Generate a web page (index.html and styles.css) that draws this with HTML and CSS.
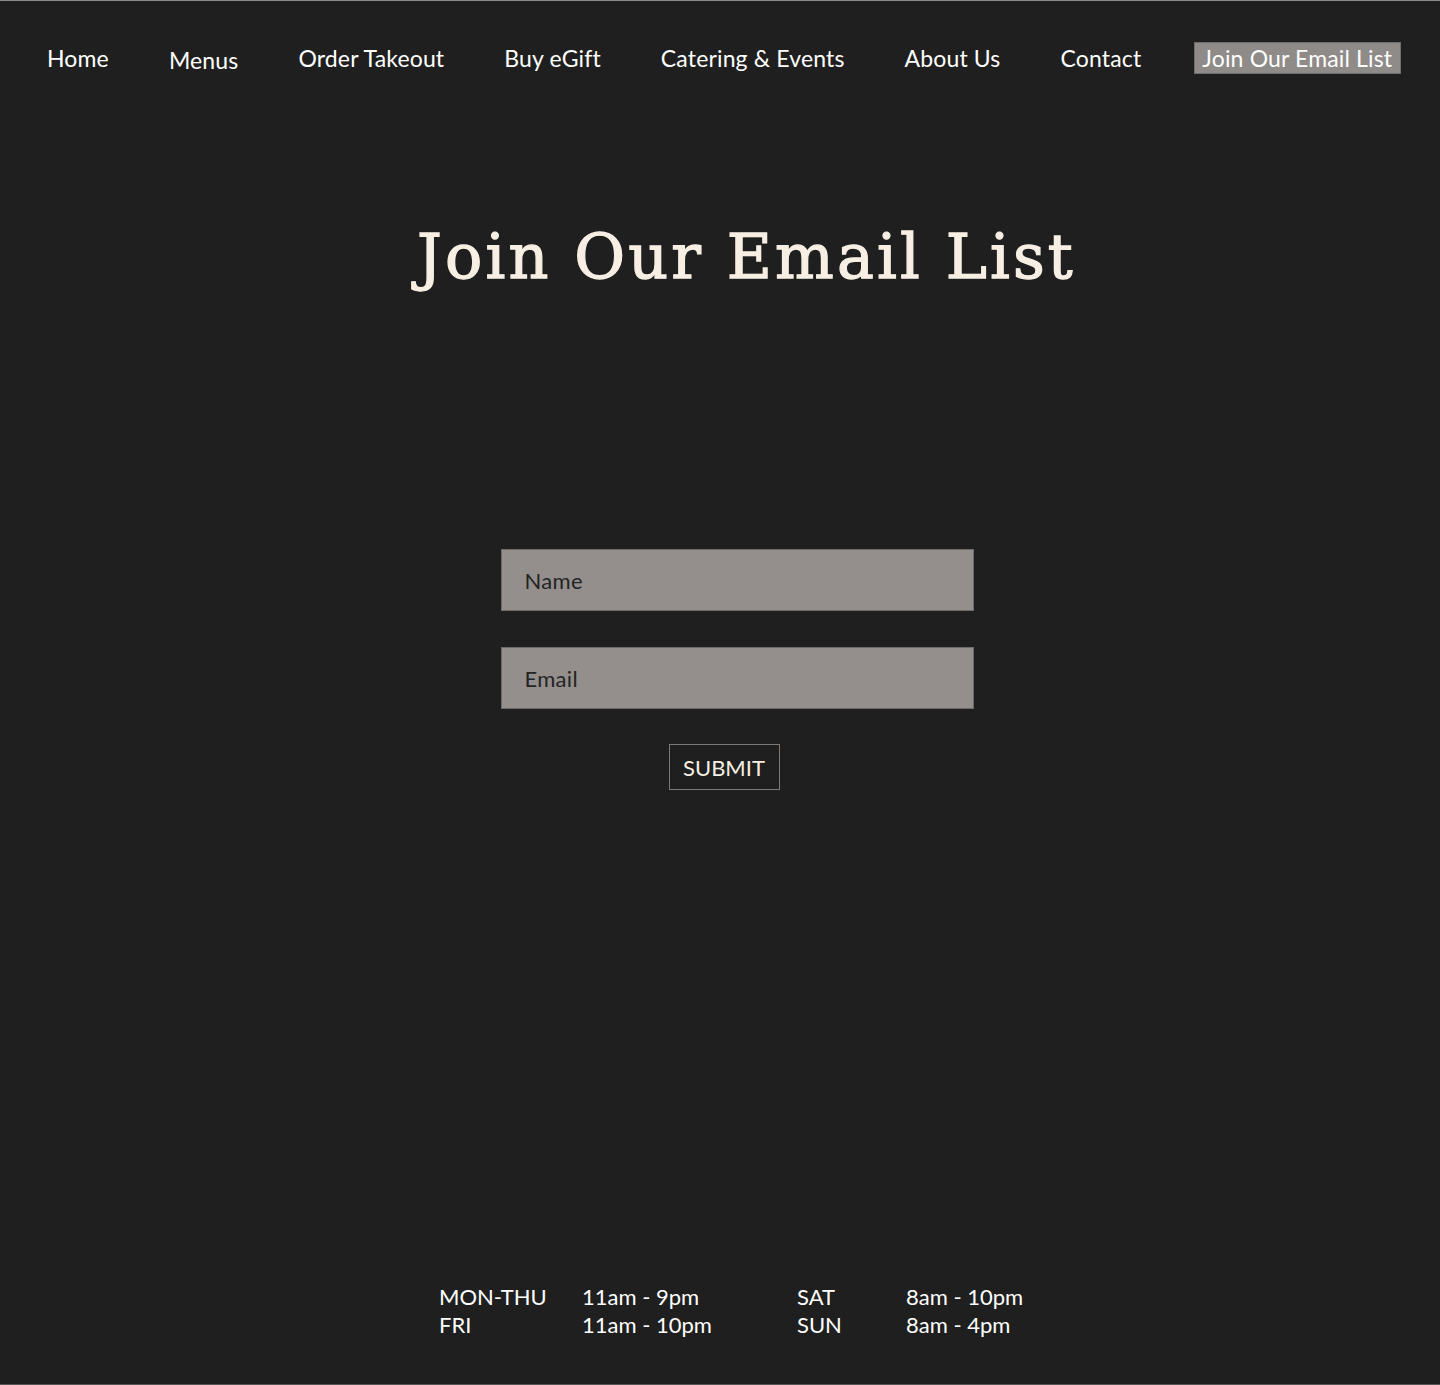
FILE: index.html
```html
<!DOCTYPE html>
<html lang="en">
<head>
<meta charset="utf-8">
<title>Join Our Email List</title>
<link rel="stylesheet" href="styles.css">
</head>
<body>
<div class="page">
  <nav class="nav">
    <a class="nav-link" href="#">Home</a>
    <a class="nav-link nav-low" href="#">Menus</a>
    <a class="nav-link" href="#">Order Takeout</a>
    <a class="nav-link" href="#">Buy eGift</a>
    <a class="nav-link" href="#">Catering &amp; Events</a>
    <a class="nav-link" href="#">About Us</a>
    <a class="nav-link" href="#">Contact</a>
    <a class="nav-link nav-active" href="#">Join Our Email List</a>
  </nav>
  <main class="main">
    <h1 class="title">Join Our Email List</h1>
    <form class="form">
      <input class="field" type="text" placeholder="Name">
      <input class="field" type="email" placeholder="Email">
      <button class="submit" type="button">SUBMIT</button>
    </form>
  </main>
  <footer class="hours">
    <span>MON-THU</span><span>11am - 9pm</span><span>SAT</span><span>8am - 10pm</span>
    <span>FRI</span><span>11am - 10pm</span><span>SUN</span><span>8am - 4pm</span>
  </footer>
</div>
</body>
</html>
```

FILE: styles.css
```css
html, body {
  margin: 0;
  padding: 0;
  background: #1f1f1f;
}
.page {
  box-sizing: border-box;
  height: 1385px;
  border-top: 1px solid #8a8a8a;
  border-bottom: 1px solid #555;
  display: flex;
  flex-direction: column;
  font-family: Lato, "Open Sans", sans-serif;
  color: #ffffff;
}
.nav {
  display: flex;
  align-items: center;
  gap: 60px;
  padding: 40px 0 0 47px;
  height: 34px;
}
.nav-link {
  color: #ffffff;
  text-decoration: none;
  font-size: 23px;
  letter-spacing: 0.15px;
  line-height: 30px;
}
.nav-low {
  position: relative;
  top: 2px;
}
.nav-active {
  margin-left: -7px;
  padding: 0 8px 0 7px;
  background: #8f8b89;
  border: 1px solid #6e6e6e;
}
.main {
  flex: 1;
  display: flex;
  flex-direction: column;
  align-items: center;
}
.title {
  margin: 144px 0 0 53px;
  font-family: "DejaVu Serif", Georgia, serif;
  font-weight: normal;
  font-size: 62px;
  line-height: 76px;
  color: #f7efe3;
  letter-spacing: 3.1px;
  -webkit-text-stroke: 1.3px #f7efe3;
}
.form {
  margin: 254px 0 0 34px;
  display: flex;
  flex-direction: column;
  align-items: center;
  gap: 36px;
}
.field {
  box-sizing: border-box;
  width: 473px;
  height: 62px;
  padding: 0 23px;
  background: #948f8d;
  border: 1px solid #6b6b6b;
  font-family: Lato, "Open Sans", sans-serif;
  font-size: 22px;
  letter-spacing: 0.3px;
  color: #222;
  outline: none;
}
.field::placeholder {
  color: #242424;
}
.submit {
  margin-left: -26px;
  margin-top: -1px;
  box-sizing: border-box;
  width: 111px;
  height: 46px;
  background: transparent;
  border: 1px solid #7d7873;
  color: #f7efe3;
  font-family: Lato, "Open Sans", sans-serif;
  font-size: 22px;
  padding: 0;
}
.hours {
  display: grid;
  grid-template-columns: 143px 215px 109px auto;
  padding: 0 0 45px 439px;
  font-size: 22px;
  line-height: 28px;
}
```
